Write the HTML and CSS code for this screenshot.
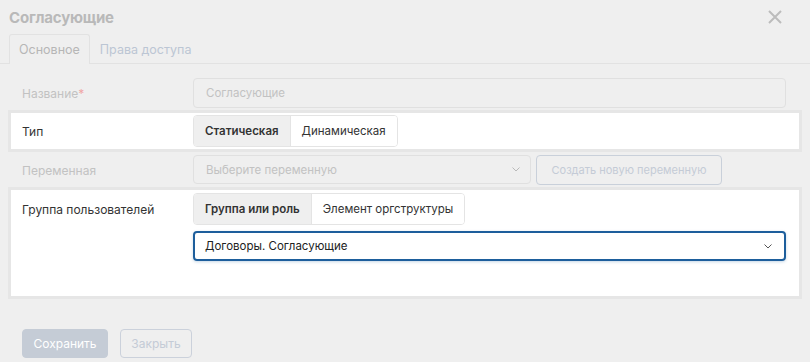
FILE: index.html
```html
<!DOCTYPE html>
<html lang="ru">
<head>
    <meta charset="UTF-8">
    <meta name="viewport" content="width=device-width, initial-scale=1.0">
    <title>Согласующие</title>
    <link rel="stylesheet" href="styles.css">
</head>
<body>
    <div class="dialog">
        <div class="dialog-header">
            <h1>Согласующие</h1>
            <button class="close-btn" aria-label="Закрыть">
                <svg width="14" height="14" viewBox="0 0 14 14"><path d="M1 1 L13 13 M13 1 L1 13" stroke="currentColor" stroke-width="2" fill="none"/></svg>
            </button>
        </div>

        <div class="tabs">
            <div class="tab active">Основное</div>
            <div class="tab">Права доступа</div>
        </div>

        <div class="form">
            <div class="row row-name disabled">
                <label>Название<span class="req">*</span></label>
                <div class="field">Согласующие</div>
            </div>

            <div class="row card card-type">
                <label>Тип</label>
                <div class="segmented">
                    <span class="seg selected">Статическая</span>
                    <span class="seg">Динамическая</span>
                </div>
            </div>

            <div class="row row-var disabled">
                <label>Переменная</label>
                <div class="var-controls">
                    <div class="field select-field">
                        <span>Выберите переменную</span>
                        <svg class="chevron" width="8" height="5" viewBox="0 0 8 5"><path d="M0.5 0.5 L4 4 L7.5 0.5" stroke="currentColor" fill="none"/></svg>
                    </div>
                    <button class="ghost-btn">Создать новую переменную</button>
                </div>
            </div>

            <div class="row card card-group">
                <label>Группа пользователей</label>
                <div class="group-controls">
                    <div class="segmented">
                        <span class="seg selected">Группа или роль</span>
                        <span class="seg">Элемент оргструктуры</span>
                    </div>
                    <div class="select-active">
                        <span>Договоры. Согласующие</span>
                        <svg class="chevron" width="8" height="5" viewBox="0 0 8 5"><path d="M0.5 0.5 L4 4 L7.5 0.5" stroke="currentColor" fill="none"/></svg>
                    </div>
                </div>
            </div>
        </div>

        <div class="footer">
            <button class="btn-primary">Сохранить</button>
            <button class="btn-secondary">Закрыть</button>
        </div>
    </div>
</body>
</html>
```

FILE: styles.css
```css
:root {
    --bg: #efefef;
    --line: #e2e2e2;
    --muted: #c2c2c2;
    --text: #333333;
    --accent: #1d5e9c;
    --btn-muted: #c5ccd6;
}

* {
    box-sizing: border-box;
}

body {
    margin: 0;
    background: var(--bg);
    font-family: Inter, "Noto Sans", sans-serif;
    font-size: 12px;
    color: var(--text);
}

.dialog {
    width: 810px;
    height: 362px;
}

.dialog-header {
    display: flex;
    justify-content: space-between;
    align-items: center;
    padding: 4px 28px 0 9px;
    height: 30px;
}

h1 {
    margin: 0;
    font-size: 15px;
    font-weight: 700;
    color: #b9b9b9;
    letter-spacing: -0.2px;
}

.close-btn {
    border: none;
    background: none;
    padding: 0;
    color: #bcbcbc;
    display: flex;
    cursor: pointer;
}

.tabs {
    display: flex;
    padding: 4px 0 0 9px;
    border-bottom: 1px solid var(--line);
}

.tab {
    height: 29px;
    padding: 0 9px;
    display: flex;
    align-items: center;
    font-size: 12.5px;
    color: #bcc6d4;
    border: 1px solid transparent;
    border-bottom: none;
    border-radius: 3px 3px 0 0;
    margin-bottom: -1px;
}

.tab.active {
    color: #b6b6b6;
    border-color: var(--line);
    background: var(--bg);
    height: 30px;
}

.form {
    padding: 14px 8px 0 8px;
}

.row {
    display: grid;
    grid-template-columns: 171px 1fr;
    align-items: center;
    padding: 0 16px 0 14px;
}

.row label {
    color: var(--text);
}

.row.disabled label {
    color: var(--muted);
}

.req {
    color: #f0a6a6;
}

.field {
    height: 30px;
    border: 1px solid #e0e0e0;
    border-radius: 4px;
    display: flex;
    align-items: center;
    padding: 0 12px;
    font-size: 11.5px;
    color: var(--muted);
}

.row-name {
    margin-bottom: 2px;
}

.card {
    background: #fff;
    border: 3px solid #e6e6e6;
    padding-left: 11px;
    padding-right: 13px;
}

.card-type {
    padding-top: 2px;
    padding-bottom: 2px;
}

.segmented {
    display: inline-flex;
    justify-self: start;
    align-self: flex-start;
    border: 1px solid #e4e4e4;
    border-radius: 4px;
    overflow: hidden;
    height: 32px;
}

.seg {
    display: flex;
    align-items: center;
    padding: 0 11px;
    font-size: 11.5px;
    background: #fff;
    border-left: 1px solid #e4e4e4;
}

.seg:first-child {
    border-left: none;
}

.seg.selected {
    background: #efefef;
    font-weight: 600;
}

.row-var {
    margin: 3px 0 2px;
}

.var-controls {
    display: flex;
    gap: 5px;
}

.select-field {
    width: 338px;
    height: 29px;
    justify-content: space-between;
    padding-right: 10px;
}

.chevron {
    color: #b9b9b9;
}

.ghost-btn {
    width: 186px;
    height: 30px;
    border: 1px solid #c9d0da;
    border-radius: 4px;
    background: transparent;
    font-family: inherit;
    font-size: 11px;
    color: #c4cbd6;
    white-space: nowrap;
    padding: 0;
}

.card-group {
    align-items: start;
    padding-top: 3px;
    padding-bottom: 35px;
}

.card-group label {
    padding-top: 9px;
}

.group-controls {
    display: flex;
    flex-direction: column;
    gap: 6px;
}

.select-active {
    height: 30px;
    border: 2px solid var(--accent);
    border-radius: 4px;
    box-shadow: 0 1px 3px rgba(29, 94, 156, 0.25);
    display: flex;
    align-items: center;
    justify-content: space-between;
    padding: 0 12px 0 10px;
    font-size: 11.5px;
    color: #222;
}

.select-active .chevron {
    color: #555;
}

.footer {
    display: flex;
    gap: 12px;
    padding: 30px 0 0 22px;
}

.footer button {
    height: 29px;
    border-radius: 4px;
    font-family: inherit;
    font-size: 12px;
    padding: 0;
}

.btn-primary {
    width: 86px;
    background: var(--btn-muted);
    border: 1px solid var(--btn-muted);
    color: #fff;
}

.btn-secondary {
    width: 72px;
    background: transparent;
    border: 1px solid #cbd1db;
    color: #c4cbd6;
}
```
